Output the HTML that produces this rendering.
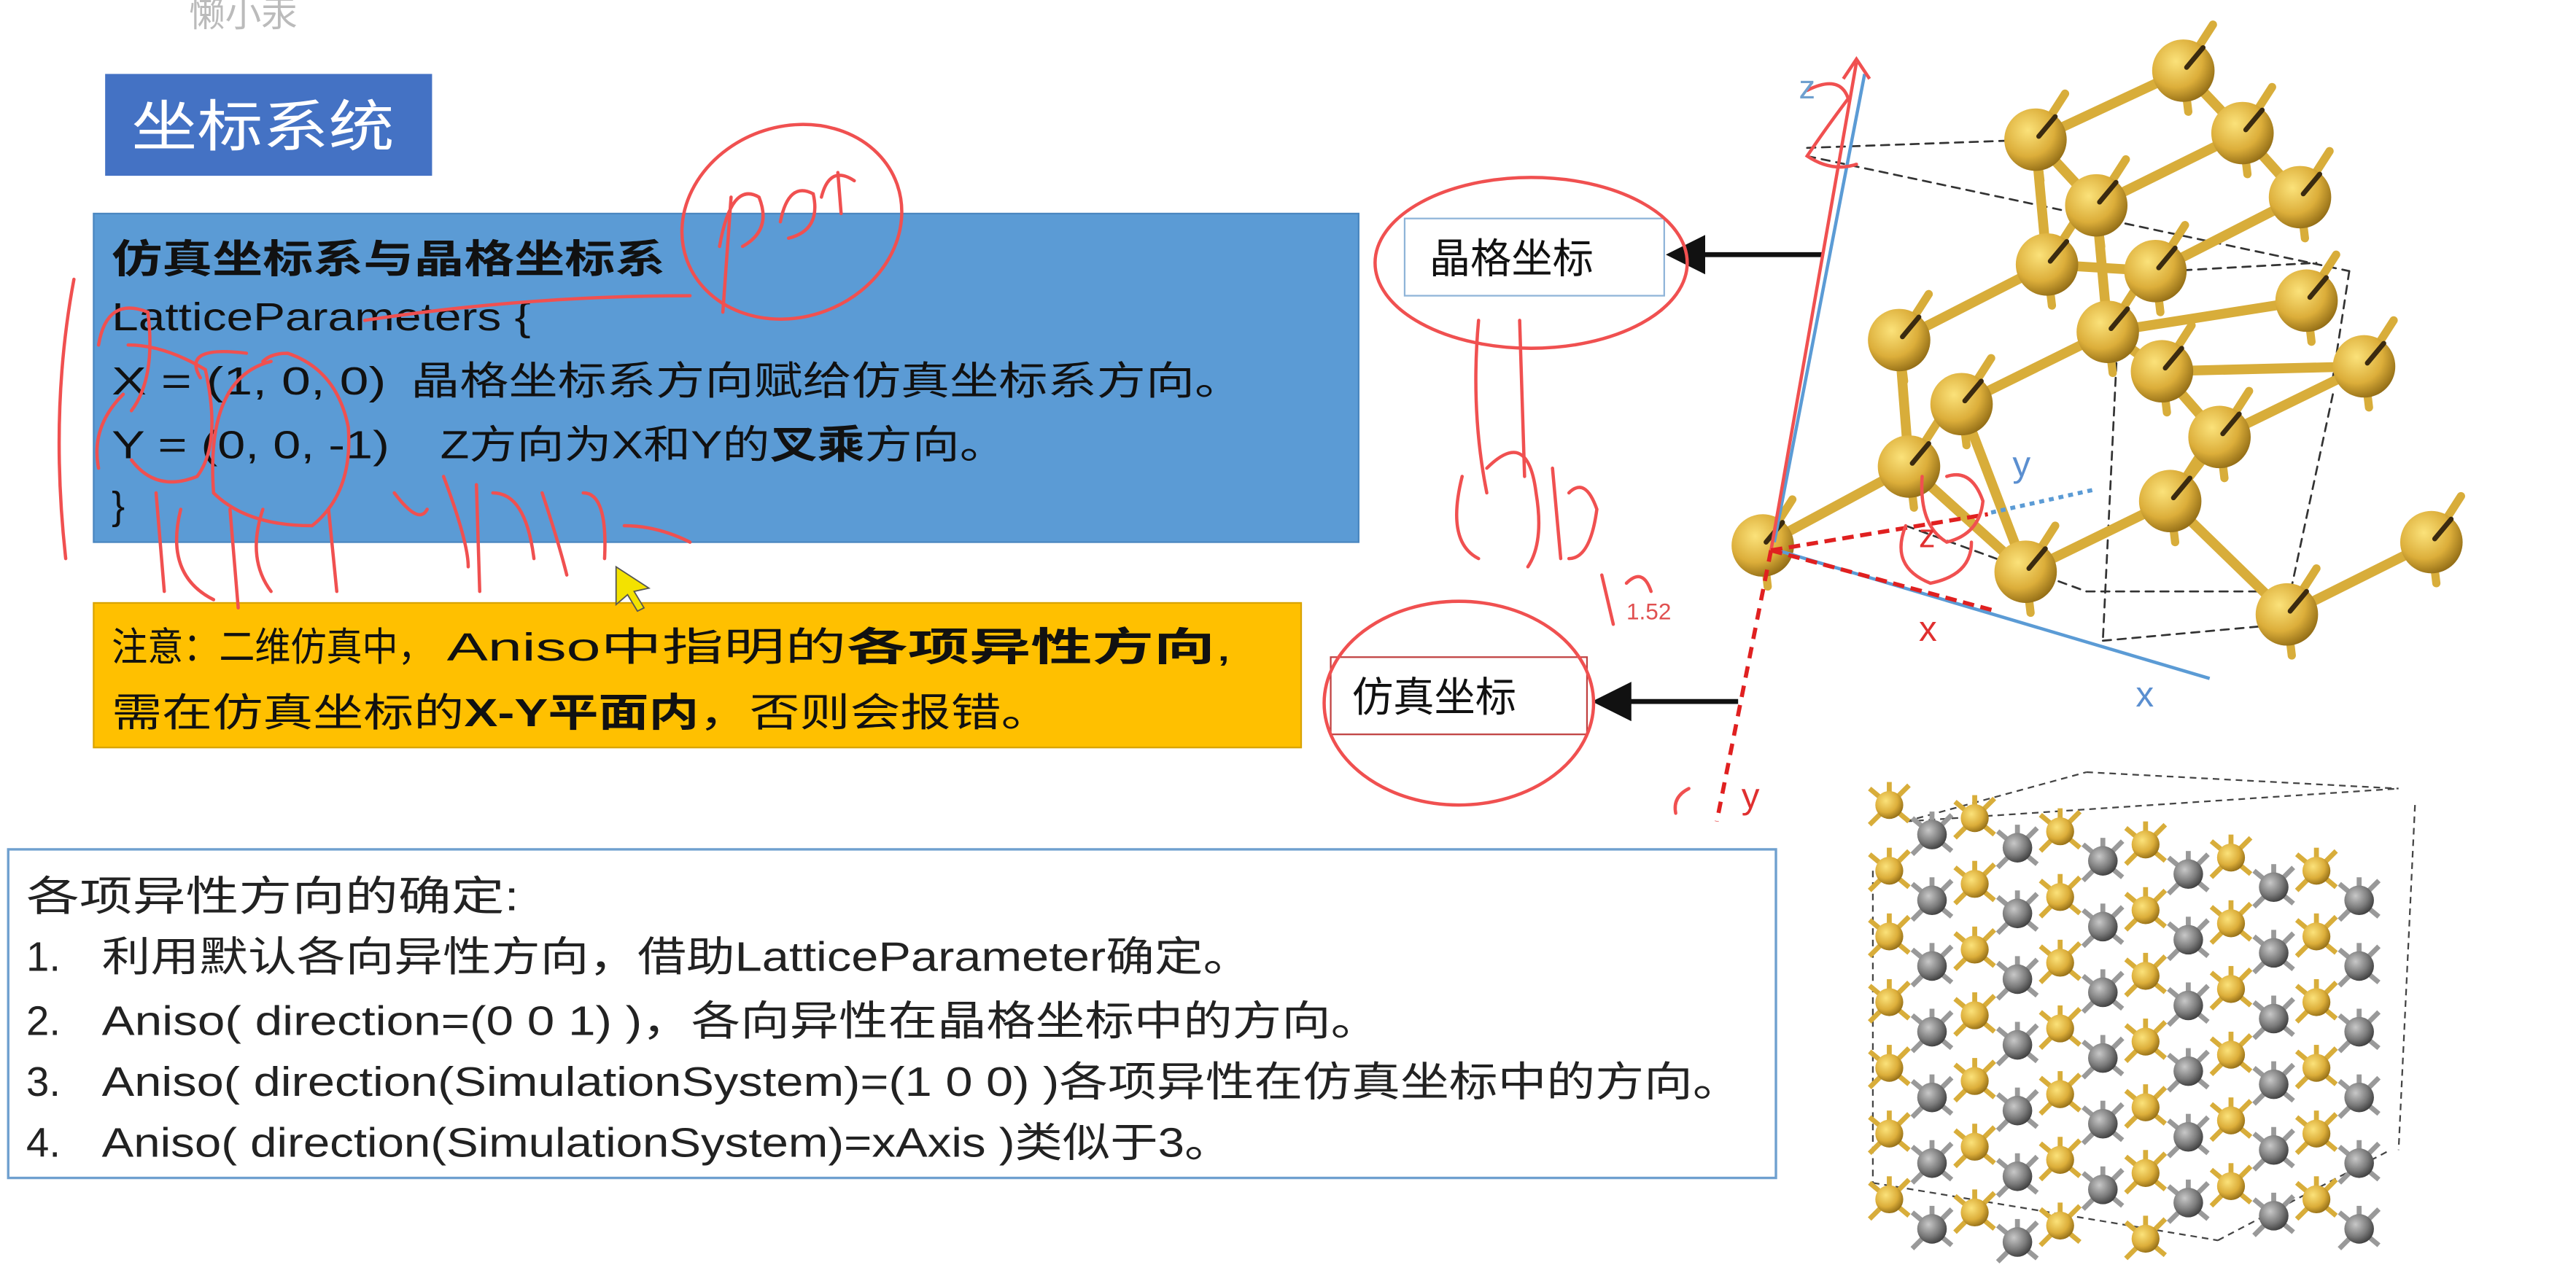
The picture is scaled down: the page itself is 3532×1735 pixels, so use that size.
<!DOCTYPE html>
<html><head><meta charset="utf-8"><style>
html,body{margin:0;padding:0;background:#fff;width:3532px;height:1735px;overflow:hidden}
svg{display:block}
text{font-family:"Liberation Sans","Noto Sans CJK SC",sans-serif}
</style></head><body>
<svg id="s" width="3532" height="1735" viewBox="0 0 1568 770" preserveAspectRatio="none" xmlns="http://www.w3.org/2000/svg">
<defs>
<radialGradient id="g" cx="0.38" cy="0.35" r="0.7"><stop offset="0" stop-color="#fbe27a"/><stop offset="0.6" stop-color="#dcae3a"/><stop offset="1" stop-color="#8f6a14"/></radialGradient>
<radialGradient id="k" cx="0.38" cy="0.35" r="0.7"><stop offset="0" stop-color="#c8c8c8"/><stop offset="0.6" stop-color="#7a7a7a"/><stop offset="1" stop-color="#3a3a3a"/></radialGradient>
<marker id="ab" markerWidth="8" markerHeight="8" refX="6" refY="4" orient="auto"><path d="M0,0 L8,4 L0,8 z" fill="#111"/></marker>
</defs>
<text x="115" y="16" font-size="22" fill="#bbb">懒小汞</text>
<rect x="64" y="45" width="199" height="62" fill="#4472c4"/>
<text x="80" y="89" font-size="34" fill="#fff" textLength="160" lengthAdjust="spacingAndGlyphs">坐标系统</text>
<rect x="57" y="130" width="770" height="200" fill="#5b9bd5" stroke="#4a86c0"/>
<g font-size="24" fill="#111">
<text x="68" y="166" font-weight="bold" textLength="337" lengthAdjust="spacingAndGlyphs">仿真坐标系与晶格坐标系</text>
<text x="68" y="201" textLength="255" lengthAdjust="spacingAndGlyphs">LatticeParameters {</text>
<text x="68" y="240" textLength="167" lengthAdjust="spacingAndGlyphs">X = (1, 0, 0)</text>
<text x="250" y="240" textLength="507" lengthAdjust="spacingAndGlyphs">晶格坐标系方向赋给仿真坐标系方向。</text>
<text x="68" y="279" textLength="169" lengthAdjust="spacingAndGlyphs">Y = (0, 0, -1)</text>
<text x="268" y="279" textLength="345" lengthAdjust="spacingAndGlyphs">Z方向为X和Y的<tspan font-weight="bold">叉乘</tspan>方向。</text>
<text x="68" y="316">}</text>
</g>
<rect x="57" y="367" width="735" height="88" fill="#ffc000" stroke="#d9a300"/>
<g font-size="24" fill="#111">
<text x="68" y="402" textLength="196" lengthAdjust="spacingAndGlyphs">注意：二维仿真中，</text>
<text x="272" y="402" textLength="478" lengthAdjust="spacingAndGlyphs">Aniso中指明的<tspan font-weight="bold">各项异性方向</tspan>,</text>
<text x="68" y="442" textLength="572" lengthAdjust="spacingAndGlyphs">需在仿真坐标的<tspan font-weight="bold">X-Y平面内</tspan>，否则会报错。</text>
</g>
<rect x="5" y="517" width="1076" height="200" fill="#fff" stroke="#6fa0cf" stroke-width="1.5"/>
<g font-size="25" fill="#222">
<text x="16" y="554" textLength="300" lengthAdjust="spacingAndGlyphs">各项异性方向的确定:</text>
<text x="16" y="591">1.</text><text x="62" y="591" textLength="700" lengthAdjust="spacingAndGlyphs">利用默认各向异性方向，借助LatticeParameter确定。</text>
<text x="16" y="630">2.</text><text x="62" y="630" textLength="778" lengthAdjust="spacingAndGlyphs">Aniso( direction=(0 0 1) )，各向异性在晶格坐标中的方向。</text>
<text x="16" y="667">3.</text><text x="62" y="667" textLength="998" lengthAdjust="spacingAndGlyphs">Aniso( direction(SimulationSystem)=(1 0 0) )各项异性在仿真坐标中的方向。</text>
<text x="16" y="704">4.</text><text x="62" y="704" textLength="688" lengthAdjust="spacingAndGlyphs">Aniso( direction(SimulationSystem)=xAxis )类似于3。</text>
</g>
<rect x="855" y="133" width="158" height="47" fill="#fff" stroke="#8fb4d8"/>
<text x="870" y="166" font-size="25" fill="#111">晶格坐标</text>
<rect x="810" y="400" width="156" height="47" fill="#fff" stroke="#c04040"/>
<text x="823" y="433" font-size="25" fill="#111">仿真坐标</text>
<line x1="1110" y1="155" x2="1020" y2="155" stroke="#111" stroke-width="3" marker-end="url(#ab)"/>
<line x1="1058" y1="427" x2="975" y2="427" stroke="#111" stroke-width="3" marker-end="url(#ab)"/>
<g id="topc" stroke="#d8ad3a" stroke-width="6" stroke-linecap="round"></g>
<g id="axes"></g>
<g id="bot"></g>
<g fill="none" stroke="#f05050" stroke-width="2" stroke-linecap="round">
<ellipse cx="482" cy="135" rx="68" ry="58" transform="rotate(-20 482 135)"/>
<path d="M438 150 Q445 110 462 120 Q470 140 452 150 M445 120 L440 190 M475 135 Q480 110 495 118 Q500 140 480 145 M500 120 Q505 100 520 110 M510 105 L512 130"/>
<ellipse cx="932" cy="160" rx="95" ry="52"/>
<ellipse cx="888" cy="428" rx="82" ry="62"/>
<path d="M900 195 Q895 250 905 300 M925 195 L928 290 M890 290 Q880 330 900 340 M905 285 Q930 260 935 300 Q940 330 930 345 M945 285 L950 340 M955 300 Q965 290 972 310 Q968 340 955 340"/>
<path d="M975 350 L982 380 M990 355 Q1000 345 1005 360"/>
<path d="M45 170 Q30 250 40 340 M60 210 Q65 180 90 190 Q95 230 80 250 M75 240 Q55 260 60 285"/>
<path d="M78 210 Q100 210 125 225 Q135 270 120 290 Q95 300 80 280"/>
<path d="M150 215 Q110 210 122 230 M165 220 Q125 230 130 300 Q150 320 190 320 Q215 300 212 260 Q205 225 175 215 Q165 215 160 220"/>
<path d="M95 300 L100 360 M110 310 Q100 350 130 365 M140 310 L145 370 M160 310 Q150 340 165 360 M200 310 L205 360"/>
<path d="M240 300 Q255 320 260 310 M270 290 Q285 330 285 345 M290 295 L292 360 M300 300 Q320 300 325 340 M330 300 Q340 330 345 350 M355 300 Q370 300 368 340 M380 320 Q400 320 420 330"/>
<path d="M222 195 Q320 180 420 180"/>
<path d="M1100 55 Q1120 45 1125 60 Q1110 80 1100 95 Q1115 105 1130 100"/>
<path d="M1170 290 Q1168 320 1185 330 Q1205 325 1207 305 Q1200 285 1185 290 M1160 320 Q1150 345 1175 355 Q1200 350 1200 330"/>
<path d="M1020 495 Q1018 485 1028 480"/>
</g>
<text x="1095" y="60" font-size="20" fill="#6fa0cf">z</text>
<text x="1225" y="290" font-size="22" fill="#5b8fd0">y</text>
<text x="1168" y="333" font-size="20" fill="#e03030">z</text>
<text x="1168" y="390" font-size="22" fill="#e03030">x</text>
<text x="1300" y="430" font-size="22" fill="#5b8fd0">x</text>
<text x="1060" y="492" font-size="22" fill="#e03030">y</text>
<text x="990" y="377" font-size="14" fill="#e05050">1.52</text>
<path d="M375 345 L375 368 L382 362 L388 372 L392 370 L386 360 L395 358 z" fill="#f3e200" stroke="#555" stroke-width="0.8"/>
</svg>
<script>
(function(){
var NS="http://www.w3.org/2000/svg";
function el(p,t,a){var e=document.createElementNS(NS,t);for(var k in a)e.setAttribute(k,a[k]);p.appendChild(e);return e;}
var tg=document.getElementById('topc');
var S=[[1329,43],[1365,81],[1400,120],[1239,85],[1276,125],[1246,161],[1312,165],[1404,183],[1283,202],[1439,223],[1156,207],[1316,226],[1194,246],[1351,266],[1162,284],[1321,305],[1073,332],[1233,348],[1392,374],[1480,330]];
var B=[[3,0],[4,1],[6,2],[10,5],[12,8],[8,7],[11,9],[13,9],[16,14],[17,15],[18,19],[3,5],[4,8],[10,14],[3,4],[8,11],[11,13],[14,17],[15,18],[12,17],[5,6],[0,1],[1,2],[13,15]];
var dash=el(tg,'g',{stroke:'#333','stroke-width':1.2,'stroke-dasharray':'5,4',fill:'none'});
[[1100,90,1240,85],[1100,95,1430,165],[1430,165,1420,230],[1290,185,1280,390],[1420,240,1390,380],[1280,390,1390,380],[1160,320,1270,360],[1270,360,1390,360],[1320,165,1410,160]].forEach(function(l){el(dash,'line',{x1:l[0],y1:l[1],x2:l[2],y2:l[3]});});
B.forEach(function(b){el(tg,'line',{x1:S[b[0]][0],y1:S[b[0]][1],x2:S[b[1]][0],y2:S[b[1]][1]});});
S.forEach(function(p){el(tg,'line',{x1:p[0],y1:p[1],x2:p[0]+18,y2:p[1]-28,'stroke-width':5});el(tg,'line',{x1:p[0],y1:p[1],x2:p[0]+3,y2:p[1]+25,'stroke-width':5});});
S.forEach(function(p){el(tg,'circle',{cx:p[0],cy:p[1],r:19,fill:'url(#g)',stroke:'none'});el(tg,'line',{x1:p[0]+2,y1:p[1]-2,x2:p[0]+12,y2:p[1]-14,stroke:'#3a2a10','stroke-width':3});});
var ax=document.getElementById('axes');
el(ax,'line',{x1:1080,y1:330,x2:1135,y2:45,stroke:'#5b9bd5','stroke-width':2});
el(ax,'line',{x1:1082,y1:335,x2:1345,y2:413,stroke:'#5b9bd5','stroke-width':2});
el(ax,'path',{d:'M1078 335 L1130 38 M1122 48 L1130 36 L1138 48',stroke:'#f05050','stroke-width':2,fill:'none'});
el(ax,'line',{x1:1078,y1:335,x2:1045,y2:500,stroke:'#e02020','stroke-width':2.5,'stroke-dasharray':'7,5'});
el(ax,'line',{x1:1078,y1:335,x2:1215,y2:372,stroke:'#e02020','stroke-width':2.5,'stroke-dasharray':'7,4'});
el(ax,'line',{x1:1078,y1:335,x2:1210,y2:313,stroke:'#e02020','stroke-width':2.5,'stroke-dasharray':'7,4'});
el(ax,'line',{x1:1212,y1:312,x2:1275,y2:298,stroke:'#5b9bd5','stroke-width':2.5,'stroke-dasharray':'3,3'});
var bot=document.getElementById('bot');
var bd=el(bot,'g',{stroke:'#444','stroke-width':1,'stroke-dasharray':'4,3',fill:'none'});
[[1160,500,1460,480],[1140,530,1140,720],[1470,490,1460,700],[1140,720,1350,755],[1350,755,1455,700],[1160,500,1270,470],[1270,470,1460,480]].forEach(function(l){el(bd,'line',{x1:l[0],y1:l[1],x2:l[2],y2:l[3]});});
var pts=[];
for(var i=0;i<6;i++)for(var j=0;j<7;j++){
 var x=1150+i*52, y=490+j*40+i*8;
 pts.push([x,y,0]);pts.push([x+26,y+18,1]);
}
pts=pts.filter(function(p){return p[0]<=1475&&p[1]<=760;});
pts.forEach(function(p){
 var g=el(bot,'g',{stroke:p[2]?'#999':'#d8ad3a','stroke-width':3});
 el(g,'line',{x1:p[0]-12,y1:p[1]-10,x2:p[0]+12,y2:p[1]+10});
 el(g,'line',{x1:p[0]+12,y1:p[1]-12,x2:p[0]-12,y2:p[1]+12});
 el(g,'line',{x1:p[0],y1:p[1],x2:p[0],y2:p[1]-14});
});
pts.forEach(function(p){
 el(bot,'circle',{cx:p[0],cy:p[1],r:p[2]?9:8.5,fill:p[2]?'url(#k)':'url(#g)'});
});
})();
</script>
</body></html>
